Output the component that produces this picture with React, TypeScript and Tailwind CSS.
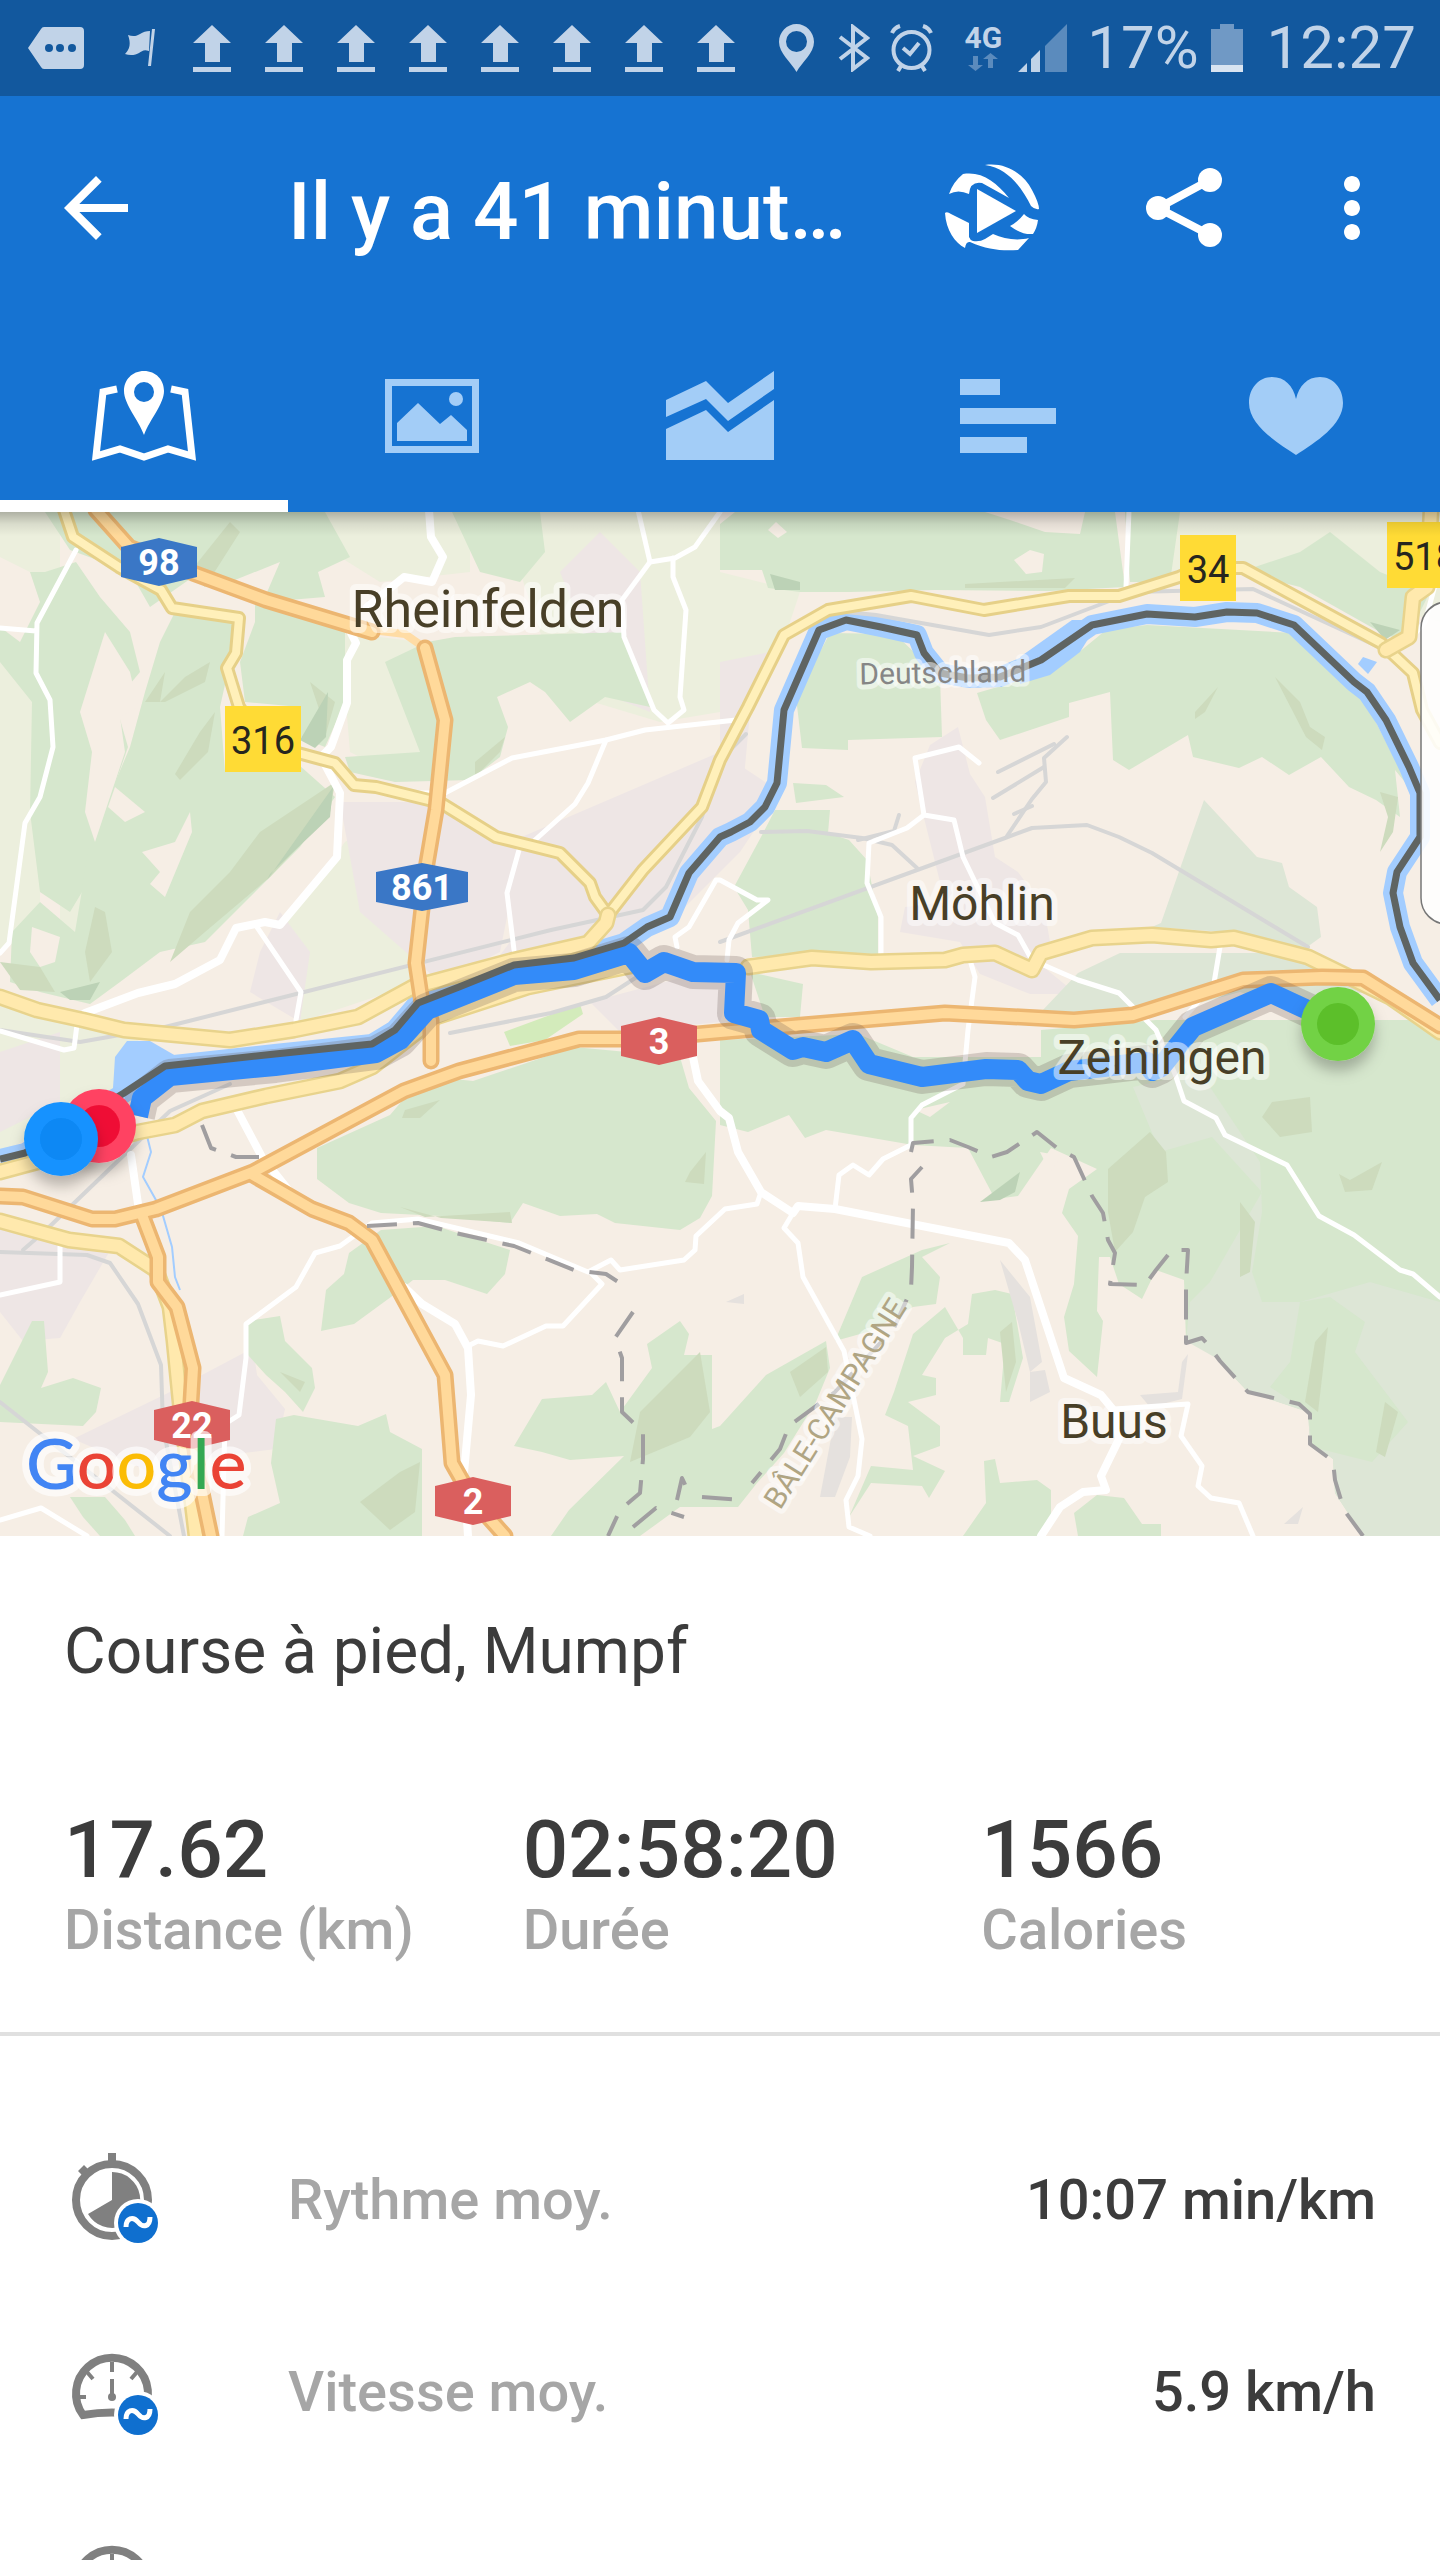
import React from 'react'
import { MdArrowBack, MdMoreVert } from 'react-icons/md'

const stats = [
  { value: '17.62', label: 'Distance (km)' },
  { value: '02:58:20', label: 'Durée' },
  { value: '1566', label: 'Calories' },
]

const forests = [
  '45,0 325,0 350,45 318,60 325,85 265,90 200,60 150,95 130,60 70,38',
  '76,50 100,85 130,120 140,160 115,190 128,235 95,330 100,350 70,400 40,380 30,300 32,190 0,150 0,60 45,60',
  '175,100 235,110 230,150 220,195 225,260 250,255 290,245 335,285 300,335 250,385 205,430 160,440 120,470 90,492 40,480 10,470 12,420 40,390 75,420 90,330 130,235 145,180 160,130',
  '255,90 345,115 345,190 325,235 300,225 300,195 245,190 240,150 255,110',
  '452,0 540,0 545,40 520,70 480,60',
  '427,130 455,125 625,120 650,195 605,185 570,210 545,180 530,170 497,185 508,215 500,245 470,268 395,270 350,260 345,245 420,240 385,150',
  '720,12 735,0 1115,0 1125,75 1050,79 935,78 850,80 800,80 768,76 762,58 720,58',
  '1125,0 1180,0 1170,70 1130,70',
  '1240,60 1300,40 1330,20 1380,60 1430,80 1405,130 1380,120 1300,75',
  '830,121 895,122 940,165 942,225 848,228 848,238 802,236 796,185',
  '977,181 1032,165 1078,141 1106,118 1147,113 1294,121 1363,185 1409,275 1395,258 1400,305 1376,288 1349,275 1321,245 1289,263 1262,245 1239,256 1193,245 1188,223 1129,258 1113,248 1110,180 1069,191 1069,205 1000,228 986,208',
  '793,271 826,273 844,285 796,291',
  '775,298 830,298 828,321 849,328 867,348 878,405 878,443 752,445 748,398 734,375 761,325',
  '750,460 803,472 800,505 765,505',
  '720,528 858,522 913,545 1041,545 1041,518 1156,508 1440,508 1440,1024 1363,1024 1335,981 1333,947 1310,930 1308,900 1248,880 1216,846 1207,832 1186,829 1184,768 1156,758 1142,787 1119,772 1110,745 1099,745 1097,799 1103,809 1097,865 1069,839 1064,805 1074,772 1078,724 1062,701 1069,677 1097,657 1051,636 1018,684 995,687 968,636 913,633 826,618 805,626 789,603 748,620 720,613',
  '390,603 413,576 445,566 473,569 574,535 680,545 689,576 716,609 712,684 700,706 680,718 615,711 597,702 560,704 523,691 510,711 441,704 381,701 349,691 317,667 317,636',
  '349,741 381,718 436,714 510,738 505,762 487,782 445,768 413,768 395,782 354,812 321,819 326,778 344,762',
  '248,809 280,804 285,829 312,856 315,876 303,900 285,880 266,863 248,843',
  '276,907 294,903 358,914 386,902 390,920 422,937 422,1024 243,1024 248,1005 280,991 271,951',
  '514,934 542,887 592,883 606,870 620,900 652,856 647,832 680,809 689,822 684,843 712,843 712,917 720,914 766,863 826,829 830,856 816,890 784,941 757,971 738,995 680,995 640,1024 551,1024 569,998 624,944 570,948 542,940',
  '835,829 862,765 922,738 950,731 922,745 940,765 936,792 913,795 871,819',
  '945,795 963,826 963,843 986,843 988,826 1005,832 1000,890 1009,890 1023,846 1012,782 995,778 972,782 968,812 945,826 922,863 936,866 936,883 908,890 940,914 940,934 913,944 945,959 929,986 922,974 871,971 849,1005 871,954 913,958 908,914 885,903 894,880 913,822',
  '984,949 995,947 1000,971 1037,968 1051,978 1051,1008 1037,1024 963,1024 986,991',
  '1074,1001 1097,983 1124,986 1142,1012 1161,1012 1161,1024 1078,1024',
  '0,873 32,809 44,809 48,860 41,876 73,866 101,876 96,900 83,914 0,910',
  '70,985 105,985 125,1008 135,1024 100,1024 83,1005',
]

const paleForests = [
  '1204,288 1257,345 1282,351 1289,375 1317,395 1321,425 1303,438 1239,421 1152,415 1161,411',
  '1078,461 1120,441 1303,441 1363,480 1300,500 1240,480 1130,510 1041,500',
  '1133,575 1200,560 1260,650 1262,700 1252,760 1262,790 1300,790 1370,770 1440,790 1440,1024 1363,1024 1335,981 1333,947 1310,930 1308,900 1248,880 1216,846 1186,829 1190,790 1210,770 1262,680 1212,625 1160,640',
  '1300,790 1330,785 1365,810 1355,840 1408,910 1372,950 1312,935 1308,900 1270,875 1290,850',
  '1440,560 1400,620 1380,700 1440,740',
]

const meadows = [
  '0,0 60,0 60,70 0,90',
  '165,0 230,0 245,30 200,60 175,50',
  '280,0 470,0 470,60 380,70 340,45',
  '500,0 720,0 720,200 660,210 560,180 520,60',
  '0,130 40,180 40,400 0,440',
  '60,330 90,330 85,480 60,440',
  '340,120 420,130 420,240 390,260 350,240',
  '345,330 395,300 430,330 420,470 300,510 280,420',
  '720,60 800,80 780,140 740,220 720,240',
  '1150,0 1440,0 1440,110 1330,80 1250,60 1150,70',
  '0,490 130,520 170,560 90,600 0,640',
]

const townAreas = [
  '340,290 440,290 520,340 500,440 440,470 360,400',
  '510,330 720,240 780,280 740,340 670,410 600,430 480,470 510,430',
  '560,60 600,20 640,60 650,200 600,180 580,110',
  '720,150 770,140 750,200 740,310 720,320',
  '930,233 958,215 970,262 985,285 995,345 1018,360 1044,395 1050,430 1035,448 1068,475 1060,482 1030,482 980,462 960,430 900,420 905,395 945,390 930,330 915,270',
  '280,400 310,440 300,510 250,480 260,440',
  '0,709 115,730 80,790 60,826 23,829 0,800',
  '73,927 170,880 253,836 257,863 285,897 276,937 220,944 150,960',
  '0,540 60,520 60,590 0,620',
  '590,490 740,450 720,510 620,520',
]

const clearings = [
  '0,45 30,60 40,90 20,130 0,115',
  '105,120 130,160 138,195 120,205 125,240 95,330 85,300 92,240 80,200',
  '115,275 145,300 125,310 108,295',
  '175,330 190,300 192,320 165,385 150,372 160,360 142,340',
  '32,415 60,425 55,450 40,455 30,440',
  '1014,48 1030,38 1044,42 1042,60 1026,62',
  '768,18 776,10 787,20 778,26',
  '985,0 1085,0 1080,22 1045,20 1010,8',
  '230,70 280,50 265,85 240,90',
  '1040,640 1062,644 1050,660',
  '915,598 950,590 930,605',
]

const ridges = [
  '190,60 230,10 240,20 205,75',
  '145,190 165,160 160,190 185,165 210,150 205,170 165,190',
  '310,170 335,190 325,225 305,230 320,200',
  '175,262 200,220 215,200 208,240 180,268',
  '260,320 335,270 330,300 270,365 205,420 170,450 190,400 230,360',
  '95,395 105,400 112,440 90,470 85,440',
  '0,450 40,455 55,480 20,478',
  '475,250 505,225 500,240 475,265',
  '965,72 1075,66 1065,76 965,76',
  '1195,200 1218,175 1205,200 1195,207',
  '1275,165 1300,190 1310,215 1325,225 1322,238 1306,225',
  '1380,280 1398,285 1393,320 1380,340 1388,305',
  '1108,657 1150,620 1166,640 1168,670 1145,685 1133,720 1115,740 1108,700',
  '1272,590 1310,585 1312,620 1280,625 1262,605',
  '1339,662 1350,668 1382,650 1372,678 1345,680',
  '405,598 440,588 420,606 402,606',
  '400,695 425,705 510,700 512,711 441,706',
  '690,660 706,640 704,672 685,670',
  '790,860 826,835 828,860 800,885',
  '280,860 305,870 300,880',
  '360,990 400,960 420,950 415,1000 390,1018',
  '640,900 700,840 710,900 690,925 630,950',
  '1240,690 1255,710 1250,760 1240,765',
  '1315,830 1328,815 1318,900 1305,890',
  '1385,890 1398,900 1385,945 1376,940',
  '1000,820 1012,810 1016,850 1006,880',
]

const deepRidges = [
  '267,368 333,275 330,305 270,362',
  '300,228 328,180 326,225 315,236',
  '980,690 1020,660 1015,680 1000,688',
  '770,62 800,70 800,78 775,78',
  '1370,110 1400,118 1385,128',
  '60,480 100,470 90,488 70,488',
]

const shadows = [
  '1000,748 1030,785 1042,850 1030,860 1018,810',
  '1030,860 1045,858 1050,880 1030,890',
  '835,905 852,905 850,945 835,985 820,985',
  '1140,883 1178,880 1182,850 1188,842 1182,887 1150,895',
  '726,790 744,782 744,792',
  '1284,1012 1303,995 1298,1012',
]

const railways = [
  'M720 430 1005 326 1032 316 1087 313 1119 325 1152 341 1308 435',
  'M761 320 807 319 862 326 892 333 917 356',
  'M858 328 894 319 899 303',
  'M1007 324 1032 287 1046 270 1044 246 1067 225',
  'M998 260 1054 232M993 286 1044 255M1014 302 1032 294',
  'M846 100 876 103 989 123 1041 115 1133 80 1253 77 1381 136',
  'M0 518 80 530 165 515 551 418 643 398 666 375 702 305 720 248 746 222',
  'M643 461 606 485 551 501 450 521',
  'M230 572 170 599 46 718 23 738',
  'M0 890 170 1024',
  'M0 740 87 743 110 751 138 792 161 853 163 914 184 1024',
]

const minorRoads = [
  'M76 38 37 111 36 161 50 188 53 235 40 285 25 311 9 431 0 441M0 116 36 119',
  'M257 415 301 480 296 508',
  'M420 281 445 281 512 246 606 228 645 218 736 208',
  'M606 228 588 271 575 292 535 328M519 338 507 381 514 438',
  'M638 -2 650 50 675 46 695 35 720 0',
  'M650 50 622 88 624 125 654 198 668 211 684 198 680 185 686 98 673 65 673 46',
  'M1129 -2 1126 75',
  'M979 251 959 235 915 246 924 303 954 308 963 345 995 411 1018 423 1032 448 1078 468 1119 481 1156 518 1175 562 1184 589 1216 606 1225 623 1287 653 1319 704 1354 723 1400 758 1413 762 1440 785',
  'M924 303 907 316 869 331 867 371 881 405 881 443',
  'M1220 435 1214 471 1185 505',
  'M970 448 975 465 968 518 963 572 922 593 911 606 911 633 883 647 869 663 853 653 839 663 835 697',
  'M1115 897 1188 892 1181 924 1202 954 1198 974 1211 986 1239 991 1253 1024',
  'M793 701 784 716 798 731 803 765 844 839 862 927 858 964 846 988 849 1015 870 1024',
  'M761 680 757 692 725 697 696 724 695 738 684 748 620 758 611 748 588 760 519 731 418 707 372 711 340 734 315 741 296 775 246 812 246 846 239 903 225 912 222 1024',
  'M592 762 602 772 563 814 546 814 503 834 478 829 468 834',
  'M720 368 757 388 768 388 738 411 729 428 727 448M720 368 716 368 689 415 675 425 677 435',
  'M0 519 64 538 74 536 78 505M0 783 60 770 60 734M0 1008 41 996 87 1024',
  'M1440 55 1425 110 1412 125',
]

const mainRoads = [
  'M429 -2 431 25 443 45 432 70 404 65 367 95',
  'M351 121 356 131 347 148 347 191 331 235 321 245 340 281 337 345 280 413 265 410 236 416 220 448 175 472 138 481 85 501',
  'M404 775 422 792 455 812 468 836 471 883 464 961 468 1024',
  'M236 596 262 645 290 680M131 643 138 692',
  'M693 545 698 569 720 599 729 606 738 640 761 680 793 701 798 694 835 697 1009 731 1025 748 1064 866 1101 883 1115 900 1119 927 1101 964 1106 978 1083 980 1060 995 1041 1024',
]

const yellowRoads = [
  'M64 -2 73 25 119 55 161 78 172 96 239 106 236 141 227 156 239 195 260 225 298 241 335 251 354 273 376 275 441 291 496 325 560 341 590 371 595 385 608 403',
  'M608 403 643 358 702 295 720 248 748 195 784 123 828 98 911 84 984 98 1069 84 1119 84 1179 65 1200 56 1243 56 1381 131 1413 161 1422 198 1440 231',
]

const wideYellowRoads = [
  'M1431 -2 1427 75 1413 85 1409 125 1386 138',
  'M608 403 606 411 588 431 514 448 413 475 358 505 294 518 230 528 124 518 83 508 37 498 0 485',
  'M640 452 528 475 436 505 372 555 340 569 266 584 202 599 175 613 138 620 37 650 0 660',
  'M748 455 812 446 871 450 945 448 963 443 995 441 1032 458 1041 441 1092 426 1152 423 1211 428 1234 426 1308 445 1390 485 1440 520',
  'M0 709 69 728 119 734 156 758 170 795 174 829 180 890 196 1024',
]

const highways = [
  'M96 -2 129 35 193 61 266 88 372 120',
  'M425 136 445 208 436 298 427 351 416 451 422 491 431 508 431 549',
  'M142 703 158 745 158 770 177 795 193 856 190 907 202 981 211 1024',
  'M253 663 312 697 349 711 372 728 445 863 452 951 473 988 505 1024',
  'M0 684 23 685 92 707 115 707 156 697 253 660 404 579 459 559 579 527 643 527 720 520 945 501 1074 508 1133 503 1243 468 1322 465 1363 466 1440 514',
]

const borders = [
  'M911 640 913 631 950 628 968 635 991 645 1007 640 1037 620 1057 636 1074 645 1092 684 1103 701 1108 728 1115 741 1110 772 1145 773 1156 758 1172 738 1188 738 1186 772 1186 831 1202 826 1209 834 1220 849 1248 880 1299 892 1310 902 1310 932 1333 949 1335 968 1344 998 1363 1024',
  'M922 655 911 667 913 692 912 755 911 778 894 816 835 880 789 914 780 937 752 971',
  'M202 613 211 636 236 645 259 645',
  'M367 714 418 711 455 721 514 734 574 758 606 762 629 777M633 800 615 826 622 846 622 900 643 920 643 947 640 981 620 998 608 1024',
  'M633 1015 656 996 684 1005M677 988 682 966 689 981M702 985 743 988',
]

const riverBorder =
  'M0 647 25 641 124 581 165 554 275 542 372 532 395 518 418 491 459 475 514 453 574 446 624 431 647 415 670 405 689 361 720 325 731 320 750 310 765 295 777 271 784 198 819 118 846 108 881 115 917 123 924 141 940 161 968 166 1000 165 1041 148 1092 113 1147 102 1195 105 1227 100 1257 101 1294 113 1354 170 1367 180 1386 208 1409 255 1420 281 1420 325 1397 360 1393 381 1400 415 1413 451 1440 488'

const track =
  'M138 604 142 586 170 564 275 554 376 541 400 528 427 498 514 463 574 458 629 441 645 461 664 450 693 460 736 461 734 501 759 508 761 518 793 538 803 535 826 540 853 528 869 552 922 565 986 557 1018 558 1028 569 1041 572 1069 559 1147 550 1152 559 1161 555 1193 515 1271 481 1338 512'

const shields = [
  { text: '98', x: 159, y: 50, half: 38, color: '#3a77c6' },
  { text: '861', x: 422, y: 375, half: 46, color: '#3a77c6' },
  { text: '3', x: 659, y: 529, half: 38, color: '#da5f5e' },
  { text: '22', x: 192, y: 913, half: 38, color: '#da5f5e' },
  { text: '2', x: 473, y: 989, half: 38, color: '#da5f5e' },
]

const plates = [
  { text: '316', x: 263, y: 227, half: 38 },
  { text: '34', x: 1208, y: 56, half: 28 },
  { text: '518', x: 1425, y: 43, half: 38 },
]

const towns = [
  { name: 'Möhlin', x: 982, y: 408 },
  { name: 'Zeiningen', x: 1162, y: 562 },
  { name: 'Buus', x: 1114, y: 926 },
]

const markers = [
  { x: 99, y: 614, outer: '#ff4362', inner: '#ef1135' },
  { x: 61, y: 627, outer: '#1792ff', inner: '#0888f4' },
  { x: 1338, y: 512, outer: '#72d245', inner: '#5bbf2a' },
]

const Areas: React.FC<{ items: string[]; fill: string }> = ({ items, fill }) => (
  <g fill={fill}>
    {items.map((points) => (
      <polygon key={points} points={points} />
    ))}
  </g>
)

const Lines: React.FC<{ items: string[]; color: string; width: number; dash?: string }> = ({
  items,
  color,
  width,
  dash,
}) => (
  <g
    fill="none"
    stroke={color}
    strokeWidth={width}
    strokeDasharray={dash}
    strokeLinejoin="round"
    strokeLinecap={dash ? 'butt' : 'round'}
  >
    {items.map((d) => (
      <path key={d} d={d} />
    ))}
  </g>
)

const RouteMap: React.FC = () => (
  <svg viewBox="0 0 1440 1024" className="block h-auto w-full" role="img" aria-label="Parcours">
    <defs>
      <linearGradient id="topShade" x1="0" y1="0" x2="0" y2="1">
        <stop offset="0" stopColor="#000" stopOpacity="0.26" />
        <stop offset="0.5" stopColor="#000" stopOpacity="0.08" />
        <stop offset="1" stopColor="#000" stopOpacity="0" />
      </linearGradient>
      <filter id="markerShade" x="-30%" y="-30%" width="160%" height="180%">
        <feDropShadow dx="0" dy="10" stdDeviation="7" floodColor="#000" floodOpacity="0.25" />
      </filter>
    </defs>
    <rect width="1440" height="1024" fill="#f6eee5" />

    {/* Terrain */}
    <Areas items={meadows} fill="#ecefdd" />
    <Areas items={townAreas} fill="#eee6e5" />
    <Areas items={forests} fill="#d6e7cd" />
    <Areas items={paleForests.slice(0, 3)} fill="#dde6d6" />
    <Areas items={paleForests.slice(3)} fill="#d6e7cd" />
    <Areas items={clearings} fill="#f6eee5" />
    <Areas items={ridges} fill="#cddbbd" />
    <Areas items={deepRidges} fill="#bcd2b6" />
    <Areas items={shadows} fill="#e5e1de" />
    <polygon points="504,520 580,492 583,502 545,528 510,534" fill="#d3ebbb" />

    {/* Rhine */}
    <path
      d={riverBorder}
      fill="none"
      stroke="#a3cdff"
      strokeWidth="20"
      strokeLinejoin="round"
    />
    <polygon points="112,592 115,545 127,529 150,529 176,544 165,556 130,585" fill="#a3cdff" />
    <polygon points="1020,172 1020,145 1072,108 1100,108 1080,140 1050,163" fill="#a3cdff" />
    <polygon points="1363,145 1377,150 1368,162 1358,152" fill="#a3cdff" />
    <path
      d="M146 620 151 640 143 665 161 697 172 735 175 765 180 778"
      fill="none"
      stroke="#a3cdff"
      strokeWidth="2"
    />

    {/* Railways and roads */}
    <Lines items={railways} color="#d6d6d6" width={4} />
    <Lines items={minorRoads} color="#ffffff" width={5} />
    <Lines items={mainRoads} color="#ffffff" width={8} />
    <Lines items={yellowRoads} color="#e6d088" width={14} />
    <Lines items={yellowRoads} color="#fff0ba" width={8} />
    <Lines items={wideYellowRoads} color="#e8d38c" width={17} />
    <Lines items={wideYellowRoads} color="#ffe9ad" width={12} />
    <path d="M372 118 405 122 425 136" fill="none" stroke="#ffdca5" strokeWidth="8" />
    <Lines items={highways} color="#ecb671" width={17} />
    <Lines items={highways} color="#ffd99a" width={10} />
    <Lines items={borders} color="#a09ea0" width={4} dash="30 16" />

    {/* Recorded track */}
    <path
      d={track}
      fill="none"
      stroke="#5b4b44"
      strokeOpacity="0.22"
      strokeWidth="34"
      strokeLinejoin="round"
    />
    <path d={track} fill="none" stroke="#338bf9" strokeWidth="20" strokeLinejoin="round" />
    <path
      d={riverBorder}
      fill="none"
      stroke="#5f6462"
      strokeWidth="7"
      strokeLinejoin="round"
    />

    {/* Road numbers */}
    {shields.map(({ text, x, y, half, color }) => (
      <g key={text}>
        <polygon
          points={`${x - half},${y - 15} ${x},${y - 24} ${x + half},${y - 15} ${x + half},${y + 15} ${x},${y + 24} ${x - half},${y + 15}`}
          fill={color}
        />
        <text x={x} y={y + 13} textAnchor="middle" className="font-['Roboto'] text-[36px] font-bold" fill="#fff">
          {text}
        </text>
      </g>
    ))}
    {plates.map(({ text, x, y, half }) => (
      <g key={text}>
        <rect x={x - half} y={y - 33} width={half * 2} height="66" fill="#ffdb35" />
        <text x={x} y={y + 15} textAnchor="middle" className="font-['Roboto'] text-[38px]" fill="#26261f">
          {text}
        </text>
      </g>
    ))}

    {/* Place names */}
    <g
      textAnchor="middle"
      stroke="#fff"
      strokeOpacity="0.5"
      strokeLinejoin="round"
      style={{ paintOrder: 'stroke' }}
    >
      <text x="488" y="115" className="font-['Roboto'] text-[52px]" fill="#483f27" strokeWidth="12">
        Rheinfelden
      </text>
      {towns.map(({ name, x, y }) => (
        <text key={name} x={x} y={y} className="font-['Roboto'] text-[48px]" fill="#483f27" strokeWidth="12">
          {name}
        </text>
      ))}
      <text
        x="943"
        y="171"
        transform="rotate(-1 943 171)"
        className="font-['Roboto'] text-[30px]"
        fill="#868686"
        strokeWidth="10"
      >
        Deutschland
      </text>
      <text
        x="844"
        y="897"
        transform="rotate(-58 844 897)"
        className="font-['Roboto'] text-[30px]"
        fill="#b0a583"
        strokeWidth="10"
      >
        BÂLE-CAMPAGNE
      </text>
    </g>

    {markers.map(({ x, y, outer, inner }) => (
      <g key={outer} filter="url(#markerShade)">
        <circle cx={x} cy={y} r="37" fill={outer} />
        <circle cx={x} cy={y} r="21" fill={inner} />
      </g>
    ))}

    <text
      x="26"
      y="977"
      className="font-['Lato'] text-[70px] font-medium"
      stroke="#fff"
      strokeOpacity="0.65"
      strokeWidth="14"
      strokeLinejoin="round"
      style={{ paintOrder: 'stroke' }}
    >
      <tspan fill="#4285f4">G</tspan>
      <tspan fill="#ea4335">o</tspan>
      <tspan fill="#fbbc05">o</tspan>
      <tspan fill="#4285f4">g</tspan>
      <tspan fill="#34a853">l</tspan>
      <tspan fill="#ea4335">e</tspan>
    </text>

    {/* Side handle, runs off the right edge */}
    <rect x="1421" y="90" width="80" height="322" rx="26" fill="#fff" fillOpacity="0.88" stroke="#777" strokeWidth="1.5" />
    <rect width="1440" height="24" fill="url(#topShade)" />
  </svg>
)

const UploadIcon: React.FC = () => (
  <svg viewBox="0 0 38 48" className="h-12 w-[38px]" fill="currentColor">
    <path d="M19 1 38 19H27V38H12V19H0zM0 43h38v5H0z" />
  </svg>
)

const StatusBar: React.FC = () => (
  <div className="flex h-24 items-center bg-[#12589e] pr-6 pl-7 text-[#c1d3e8]">
    <svg viewBox="0 0 56 42" className="mr-5 h-[42px] w-14" fill="currentColor">
      <path d="M16 0h36q4 0 4 4v34q0 4-4 4H16q-2 0-3-2L0 21 13 2q1-2 3-2z" />
      <g fill="#12589e">
        <circle cx="21" cy="21" r="4" />
        <circle cx="32" cy="21" r="4" />
        <circle cx="44" cy="21" r="4" />
      </g>
    </svg>
    <div className="flex w-[72px] justify-center">
      <svg viewBox="0 0 30 38" className="h-[38px] w-[30px]" fill="currentColor">
        <path d="M3 6C8 8 12 7 15 5S21 2 25 2L24 22C19 20 17 22 14 24S5 27 0 25C5 20 6 14 3 6zM27 0h3l-4 37h-3z" />
      </svg>
    </div>
    {Array.from({ length: 8 }, (_, i) => (
      <div key={i} className="flex w-[72px] justify-center">
        <UploadIcon />
      </div>
    ))}
    <div className="ml-auto flex items-center">
      <svg viewBox="0 0 35 48" className="mr-6 h-12 w-[35px]" fill="currentColor" fillRule="evenodd">
        <path d="M17.500 0C8 0 0 8 0 18c0 11 12 20 17.500 30C23 38 35 29 35 18 35 8 27 0 17.500 0zm0 7a10.500 10.500 0 1 1 0 21 10.500 10.500 0 0 1 0-21z" />
      </svg>
      <svg viewBox="0 0 32 48" className="mr-5 h-12 w-8" fill="none" stroke="currentColor" strokeWidth="4">
        <path d="M2 13 29 34 15 45V3L29 14 2 35" />
      </svg>
      <svg viewBox="0 0 43 48" className="mr-8 h-12 w-[43px]" fill="none" stroke="currentColor" strokeWidth="4">
        <circle cx="21.500" cy="26" r="18" />
        <path d="M13 24l7 6 9-11M2 9q2-5 8-7M41 9q-2-5-8-7M11 42l-3 5M32 42l3 5" />
      </svg>
      <div className="mr-4 flex flex-col items-center">
        <span className="text-[30px] leading-7 font-bold">4G</span>
        <svg viewBox="0 0 30 20" className="h-5 w-[30px]" fill="#5b8bbd">
          <path d="M5 4h5v9h5L7.500 19 0 13h5zM20 16h5V7h5L22.500 1 15 7h5z" />
        </svg>
      </div>
      <svg viewBox="0 0 49 48" className="mr-5 h-12 w-[49px]">
        <path d="M27 22 49 0v48H27z" fill="#5b8bbd" />
        <path d="M0 48 9 39v9zM13 35l9-9v22h-9z" fill="currentColor" />
      </svg>
      <span className="mr-3 text-[60px] leading-none">17%</span>
      <svg viewBox="0 0 32 48" className="mr-6 h-12 w-8">
        <path d="M9 0h14v5h9v43H0V5h9z" fill="#7099c5" />
        <path d="M0 41h32v7H0z" fill="#d9e4f1" />
      </svg>
      <span className="text-[60px] leading-none">12:27</span>
    </div>
  </div>
)

const Toolbar: React.FC = () => (
  <div className="flex h-56 items-center pr-10 pl-12">
    <button aria-label="Retour">
      <MdArrowBack className="size-24" />
    </button>
    <h1 className="ml-36 flex-1 truncate pt-2 text-[80px] leading-[96px] font-medium">Il y a 41 minut…</h1>
    <button aria-label="Lecture" className="mr-24">
      <svg viewBox="0 0 96 96" className="size-24" fill="currentColor">
        <path d="M41 5C62 2 80 14 88 30Q95 43 95 49Q91 50 87 46C79 30 65 8 41 5z" />
        <path d="M5 34Q9 22 19 14C38 11 52 22 65 38L38 23Q26 21 25 34Q14 29 5 34z" />
        <path d="M33 29 72 51 33 73z" />
        <path d="M1 53Q3 51 7 54L25 63V77Q26 80 29 81Q36 82 41 79L49 74C60 79 73 81 85 78L74 90C58 91 44 90 26 82Q22 81 21 88C11 83 2 70 1 53z" />
        <path d="M80 54Q84 59 94 60Q93 68 89 74Q78 75 66 66Q74 62 80 54z" />
      </svg>
    </button>
    <button aria-label="Partager" className="mr-18">
      <svg viewBox="0 0 96 96" className="size-24" fill="currentColor">
        <path d="M22 48 74 20M22 48 74 75" stroke="currentColor" strokeWidth="8" />
        <circle cx="22" cy="48" r="12" />
        <circle cx="74" cy="20" r="12" />
        <circle cx="74" cy="75" r="12" />
      </svg>
    </button>
    <button aria-label="Plus d'options">
      <MdMoreVert className="size-24" />
    </button>
  </div>
)

const tabs = [
  {
    name: 'Carte',
    icon: (
      <g>
        <path
          d="M29 21 15 24 8 88 32 81 56 89 80 81 104 88 97 24 83 21"
          fill="none"
          stroke="currentColor"
          strokeWidth="7"
        />
        <path
          fillRule="evenodd"
          d="M56 3c-12 0-20 9-20 20 0 13 14 28 20 44 6-16 20-31 20-44C76 12 68 3 56 3zm0 11a10 10 0 1 1 0 20 10 10 0 0 1 0-20z"
        />
      </g>
    ),
  },
  {
    name: 'Photos',
    icon: (
      <g>
        <path fillRule="evenodd" d="M9 11h94v74H9zM16 18v60h80V18z" />
        <path d="M21 55 42 35 64 56 75 47 91 62v11H21z" />
        <circle cx="80" cy="31" r="7" />
      </g>
    ),
  },
  {
    name: 'Graphiques',
    icon: (
      <g>
        <path d="M2 32 42 13 64 35 110 3v18L64 53 42 31 2 49z" />
        <path d="M2 61 42 42 64 64 110 32v60H2z" />
      </g>
    ),
  },
  {
    name: 'Tours',
    icon: <path d="M8 11h40v16H8zM8 40h96v16H8zM8 69h67v16H8z" />,
  },
  {
    name: 'Cardio',
    icon: (
      <path d="M56 87C36 74 9 57 9 35 9 20 19 9 32 9c13 0 21 9 24 22C59 18 67 9 80 9c13 0 23 11 23 26 0 22-27 39-47 52z" />
    ),
  },
]

const Tabs: React.FC = () => (
  <nav className="grid h-48 grid-cols-5">
    {tabs.map((tab, i) => (
      <button
        key={tab.name}
        aria-label={tab.name}
        className={`flex items-center justify-center border-y-12 border-t-transparent ${
          i === 0 ? 'border-b-white text-white' : 'border-b-transparent text-[#a3cdf7]'
        }`}
      >
        <svg viewBox="0 0 112 96" className="h-24 w-28" fill="currentColor">
          {tab.icon}
        </svg>
      </button>
    ))}
  </nav>
)

const AverageBadge: React.FC = () => (
  <g>
    <circle cx="74" cy="71" r="24" fill="#fff" />
    <circle cx="74" cy="71" r="20" fill="#0f6fcf" />
    <path d="M62 75C62 66 69 64 74 70S86 75 86 65" fill="none" stroke="#fff" strokeWidth="5" />
  </g>
)

const PaceIcon: React.FC = () => (
  <svg viewBox="0 0 96 96" className="size-24">
    <circle cx="48" cy="48" r="36" fill="none" stroke="#808080" strokeWidth="8" />
    <path d="M44 1h8v10h-8zM14 19l6-6 6 6-6 6z" fill="#808080" />
    <path d="M48 48V20A28 28 0 1 1 24 62z" fill="#808080" />
    <AverageBadge />
  </svg>
)

const SpeedIcon: React.FC = () => (
  <svg viewBox="0 0 96 96" className="size-24">
    <path
      d="M19 71A36 36 0 1 1 77 71Q48 66 19 71z"
      fill="none"
      stroke="#808080"
      strokeWidth="8"
    />
    <path d="M48 18v10M13 53h9M73 28l-6 7M23 28l6 7M48 35v18" stroke="#808080" strokeWidth="4" />
    <circle cx="48" cy="53" r="4" fill="#808080" />
    <AverageBadge />
  </svg>
)

const details = [
  { label: 'Rythme moy.', value: '10:07 min/km', icon: PaceIcon },
  { label: 'Vitesse moy.', value: '5.9 km/h', icon: SpeedIcon },
  { label: 'Vitesse max.', value: '8.9 km/h', icon: SpeedIcon },
]

export default function App() {
  return (
    <div className="h-screen overflow-hidden bg-white font-['Roboto',sans-serif] text-[#3c3c3c]">
      <StatusBar />
      <header className="bg-[#1673d2] text-white">
        <Toolbar />
        <Tabs />
      </header>

      <RouteMap />

      {/* Summary */}
      <section className="border-b-4 border-[#e0e0e0] pt-[78px] pb-[70px] pl-16">
        <h2 className="text-[64px] leading-[76px]">Course à pied, Mumpf</h2>
        <dl className="mt-28 grid grid-cols-3">
          {stats.map((stat) => (
            <div key={stat.label} className="flex flex-col-reverse">
              <dt className="text-[56px] leading-[64px] font-medium text-[#a6a6a6]">{stat.label}</dt>
              <dd className="text-[80px] leading-[96px] font-medium">{stat.value}</dd>
            </div>
          ))}
        </dl>
      </section>

      {/* Details */}
      <ul className="px-16 pt-17 text-[56px] font-medium">
        {details.map((item) => (
          <li key={item.label} className="flex h-48 items-center">
            <item.icon />
            <span className="ml-32 flex-1 text-[#a6a6a6]">{item.label}</span>
            <span>{item.value}</span>
          </li>
        ))}
      </ul>
    </div>
  )
}
